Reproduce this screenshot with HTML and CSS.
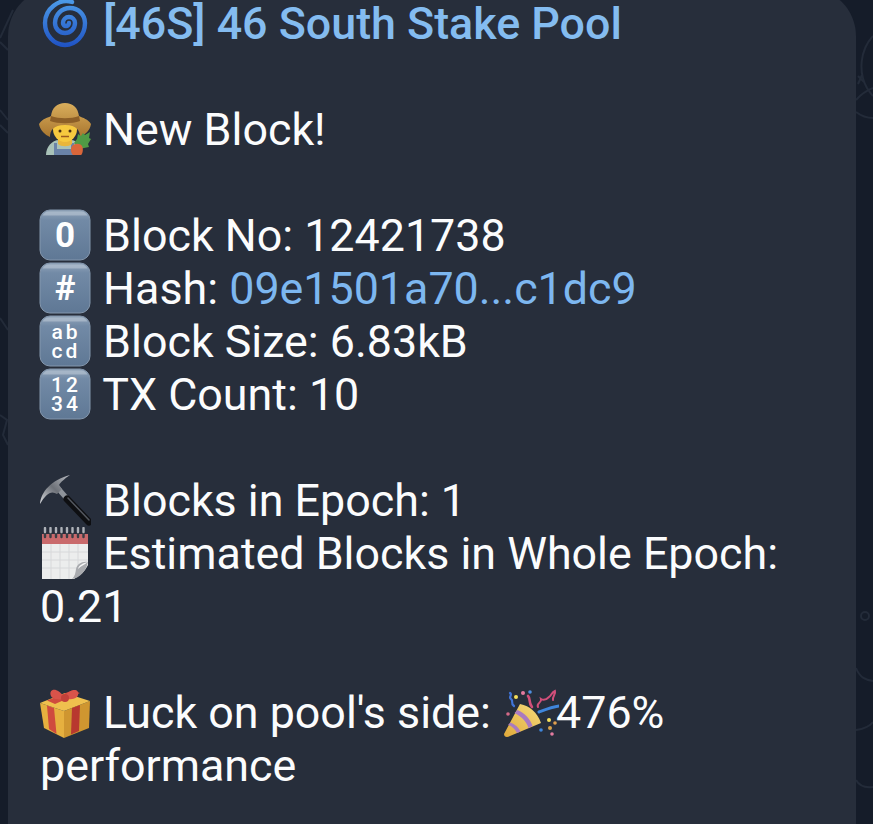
FILE: index.html
```html
<!DOCTYPE html>
<html lang="en">
<head>
<meta charset="utf-8">
<title>46 South Stake Pool</title>
<link rel="stylesheet" href="styles.css">
</head>
<body>
<svg class="defs" aria-hidden="true">
  <defs>
    <linearGradient id="spiralG" x1="0" y1="0" x2="0" y2="52" gradientUnits="userSpaceOnUse"><stop offset="0" stop-color="#4f9fea"/><stop offset="1" stop-color="#1d4fc2"/></linearGradient>
    <linearGradient id="keyG" x1="0" y1="0" x2="0" y2="1"><stop offset="0" stop-color="#93a6bb"/><stop offset=".2" stop-color="#728aa6"/><stop offset="1" stop-color="#5f7895"/></linearGradient>
    <linearGradient id="hatG" x1="0" y1="0" x2="0" y2="1"><stop offset="0" stop-color="#d9ae5c"/><stop offset="1" stop-color="#a9762f"/></linearGradient>
    <linearGradient id="coneG" x1="0" y1="1" x2="1" y2="0"><stop offset="0" stop-color="#e0a93a"/><stop offset="1" stop-color="#f5dc7c"/></linearGradient>
    <linearGradient id="steelG" x1="0" y1="1" x2="1" y2="0"><stop offset="0" stop-color="#d8dade"/><stop offset=".5" stop-color="#6d7178"/><stop offset="1" stop-color="#b9bcc2"/></linearGradient>
    <symbol id="key" viewBox="0 0 52 52">
      <rect x="1" y="1" width="50" height="50" rx="10" fill="url(#keyG)" stroke="#8497ad" stroke-width="1"/>
      <path d="M10 2.500h32a8 8 0 0 1 6.500 4H3.500a8 8 0 0 1 6.500-4z" fill="#b9c6d4" opacity=".6"/>
    </symbol>
  </defs>
</svg>

<svg class="doodles" viewBox="0 0 873 824" aria-hidden="true">
  <g fill="none" stroke="#232b39" stroke-width="2">
    <path d="M0 38 L13 10"/>
    <path d="M0 42 L8 50"/>
    <path d="M0 110 L8 120 M0 125 L8 133"/>
    <path d="M0 318 L8 330 M0 415 L7 420 L3 435 L8 445"/>
    <path d="M873 36 C860 50 858 72 867 88 C870 93 873 96 873 96"/>
    <path d="M858 84 L862 75 M858 76 L864 82"/>
    <path d="M856 100 C863 92 868 90 873 88 M856 112 C860 115 866 118 873 118"/>
    <circle cx="865" cy="616" r="4"/>
    <path d="M856 668 C860 678 866 680 873 681"/>
    <path d="M856 730 C864 729 870 726 873 722"/>
    <path d="M856 780 C860 787 866 788 873 787"/>
  </g>
</svg>

<main class="bubble">
  <div class="message">
    <svg class="emoji" viewBox="0 0 52 52" aria-hidden="true"><path d="M33 5C20 1 6 12 6 26A20 22 0 0 0 46 26A15 15 0 0 0 16 26A10 10 0 0 0 36 26A6 6 0 0 0 24 26A3 3 0 0 0 30 26" fill="none" stroke="url(#spiralG)" stroke-width="4.400" stroke-linecap="round"/></svg> <a class="title">[46S] 46 South Stake Pool</a><br>
    <br>
    <svg class="emoji" viewBox="0 0 52 52" aria-hidden="true">
      <path d="M7 52c0-8 6-15 13-15h12c6 0 9 6 9 15z" fill="#a9c2b8"/>
      <path d="M15 52V40h3v6h14v-6h3v12z" fill="#6a83a8"/>
      <path d="M19 33h14v8c-3 3-11 3-14 0z" fill="#e9b63a"/>
      <ellipse cx="26" cy="26" rx="12" ry="13" fill="#f6c93f"/>
      <path d="M0 21c4-6 9-6 12-8C13 5 18 0 26 0s13 5 14 13c4 2 9 3 12 8-1 6-5 10-11 13 0-6-3-12-15-12S11 28 11 34C6 32 1 27 0 21z" fill="url(#hatG)"/>
      <path d="M12 13c8 3 20 3 28 0l1 5c-8 3-22 3-30 0z" fill="#8d5f27"/>
      <circle cx="21" cy="28" r="1.500" fill="#4a2f12"/><circle cx="31" cy="28" r="1.500" fill="#4a2f12"/>
      <path d="M22 33.500h8" stroke="#9a5a20" stroke-width="1.500"/>
      <path d="M35 40l3-4 1-5 3 2 2-3 2 2 5-3-1 6 2 1-3 5 1 3-5 1-5 1z" fill="#4f9a45"/>
      <path d="M33 43c3-3 8-3 10 0s0 9-1 9h-8c-2-2-3-6-1-9z" fill="#d9663a"/>
    </svg> New Block!<br>
    <br>
    <svg class="emoji" viewBox="0 0 52 52" aria-hidden="true"><use href="#key"/><text class="keytext big" x="26" y="38" text-anchor="middle">0</text></svg> Block No: 12421738<br>
    <svg class="emoji" viewBox="0 0 52 52" aria-hidden="true"><use href="#key"/><text class="keytext big" x="26" y="38" text-anchor="middle">#</text></svg> Hash: <a class="link">09e1501a70...c1dc9</a><br>
    <svg class="emoji" viewBox="0 0 52 52" aria-hidden="true"><use href="#key"/><text class="keytext small" x="27" y="24" text-anchor="middle">ab</text><text class="keytext small" x="27" y="43" text-anchor="middle">cd</text></svg> Block Size: 6.83kB<br>
    <svg class="emoji" viewBox="0 0 52 52" aria-hidden="true"><use href="#key"/><text class="keytext small" x="27" y="24" text-anchor="middle">12</text><text class="keytext small" x="27" y="43" text-anchor="middle">34</text></svg> TX Count: 10<br>
    <br>
    <svg class="emoji" viewBox="0 0 52 52" aria-hidden="true">
      <path d="M17 12L30 27" stroke="#8f949b" stroke-width="5" fill="none"/>
      <path d="M28 25L50 48" stroke="#0e0f12" stroke-width="7" stroke-linecap="round" fill="none"/>
      <path d="M29 24L50 46" stroke="#54585f" stroke-width="1.500" stroke-linecap="round" fill="none"/>
      <path d="M1 30C2 18 12 6 31 1 25 5 22 8 20 11l3 4-5 5C12 16 7 20 1 30z" fill="url(#steelG)"/>
    </svg> Blocks in Epoch: 1<br>
    <svg class="emoji" viewBox="0 0 52 52" aria-hidden="true">
      <rect x="3" y="7" width="46" height="45" fill="#eceded"/>
      <rect x="3" y="7" width="46" height="10" fill="#c96a6c"/>
      <path d="M3 25h46M3 33h46M3 41h46M12 17v35M21 17v35M30 17v35M39 17v35" stroke="#d7d8da" stroke-width="1"/>
      <path d="M6 5v5M11.500 5v5M17 5v5M22.500 5v5M28 5v5M33.500 5v5M39 5v5M44.500 5v5" stroke="#3a3d44" stroke-width="2.400" stroke-linecap="round"/>
      <path d="M6 1v4M11.500 1v4M17 1v4M22.500 1v4M28 1v4M33.500 1v4M39 1v4M44.500 1v4" stroke="#aeb2b8" stroke-width="2.400" stroke-linecap="round"/>
      <path d="M49 38c-3 6-6 9-14 14h14z" fill="#272e3b"/>
      <path d="M49 35c-6-1-11 2-12 7-.5 4-1 7-4 10 8-1 14-8 16-17z" fill="#a9abaf"/>
      <path d="M49 35c-5 1-9 3-10 7 3-3 6-4 10-7z" fill="#f6f6f6"/>
    </svg> Estimated Blocks in Whole Epoch: 0.21<br>
    <br>
    <svg class="emoji" viewBox="0 0 52 52" aria-hidden="true">
      <path d="M1 17l24 8v27L5 42z" fill="#e6b03f"/>
      <path d="M25 25l26-10-1 27-25 10z" fill="#cf9630"/>
      <path d="M1 17L26 7l25 8-26 10z" fill="#efc04e"/>
      <path d="M8 14.500l25-10 8 2.500-25 11z" fill="#cf4a3e"/>
      <path d="M8 19.500l7 2.500 2.500 26L10 43z" fill="#cf4a3e"/>
      <path d="M33 22l8-3-1 26-8 3.500z" fill="#b8382f"/>
      <path d="M25 11C18 0 9 3 12 10c1 3 7 4 13 3 7 1 13 0 14-4 2-6-7-8-14 2z" fill="#d9534a"/>
      <circle cx="26" cy="12" r="4" fill="#c2413a"/>
    </svg> Luck on pool's side: <svg class="emoji popper" viewBox="0 0 56 54" aria-hidden="true">
      <path d="M17 20L1 50c0 3 3 4 6 2l31-13c-4-11-11-17-21-19z" fill="url(#coneG)"/>
      <path d="M11.500 29c6 3 12 8 14 15l4-2c-2-7-8-13-15-16zM5 41c4 1 7 4 9 8l3.500-1.500c-2-4-5-7-10-9z" fill="#a97ac0"/>
      <path d="M36 28c8-3 13-5 20-6" fill="none" stroke="#3f86dc" stroke-width="3" stroke-linecap="round"/>
      <path d="M7 9c3 2-2 4 1 6s-1 4 3 7" fill="none" stroke="#3f74d8" stroke-width="2.200" stroke-linecap="round"/>
      <path d="M25 12c3 3 0 6 4 11" fill="none" stroke="#d14f7a" stroke-width="2.600" stroke-linecap="round"/>
      <path d="M35 23c-2-4 4-4 3-8 3 2 5 1 8-2 3-2 2-4 6-6 1 3-3 6-2 9" fill="none" stroke="#d14f7a" stroke-width="2" stroke-linecap="round"/>
      <circle cx="13" cy="13" r="2" fill="#f6e05a"/><circle cx="20" cy="9" r="2" fill="#e47ba0"/><circle cx="27" cy="8" r="1.800" fill="#4e8fe0"/>
      <circle cx="5" cy="30" r="1.800" fill="#d46a88"/><circle cx="46" cy="36" r="2" fill="#f6e05a"/><circle cx="52" cy="39" r="1.800" fill="#e0a050"/>
      <circle cx="38" cy="46" r="1.800" fill="#3f86dc"/><circle cx="47" cy="44" r="2" fill="#d9a24a"/><circle cx="49" cy="50" r="1.800" fill="#e47ba0"/>
    </svg>476% performance
  </div>
</main>
</body>
</html>
```

FILE: styles.css
```css
html, body {
  height: 100%;
}

body {
  margin: 0;
  overflow: hidden;
  position: relative;
  background: #151c29;
  font-family: Roboto, "Liberation Sans", sans-serif;
}

.defs {
  position: absolute;
  width: 0;
  height: 0;
}

.doodles {
  position: absolute;
  inset: 0;
  width: 100%;
  height: 100%;
}

.bubble {
  position: relative;
  box-sizing: border-box;
  width: 848px;
  height: 860px;
  margin: -12px 0 0 8px;
  padding: 9px 32px 0;
  background: #272e3b;
  border-radius: 48px 48px 0 0;
}

.message {
  font-size: 44.800px;
  line-height: 53px;
  color: #fbfcfd;
}

.title {
  color: #84bcf0;
  font-weight: 500;
}

.link {
  color: #7db7f0;
}

.emoji {
  width: 52px;
  height: 52px;
  margin: -10px 1px -10px -1px;
  vertical-align: 0;
}

.popper {
  width: 56px;
  height: 54px;
  margin: -10px -3px -10px 1px;
}

.keytext {
  fill: #fff;
  font-family: Roboto, "Liberation Sans", sans-serif;
}

.big {
  font-size: 35px;
  font-weight: 700;
}

.small {
  font-size: 21px;
  font-weight: 500;
  letter-spacing: 3px;
}
```
